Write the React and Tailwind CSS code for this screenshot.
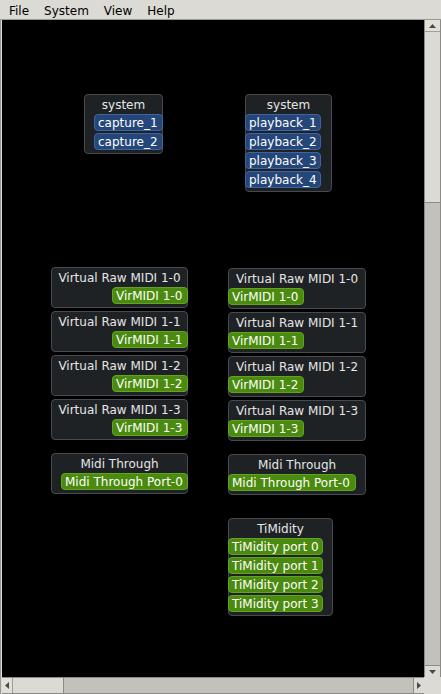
import React from 'react';

// canvas origin on the page is (2, 20); node positions below are relative to it
const nodes = [
  { title: 'system', box: 'left-[82px] top-[74px] w-[79px]', out: true, kind: 'audio', port: 'w-[69px]', ports: ['capture_1', 'capture_2'] },
  { title: 'system', box: 'left-[243px] top-[74px] w-[87px]', out: false, kind: 'audio', port: 'w-[76px]', ports: ['playback_1', 'playback_2', 'playback_3', 'playback_4'] },

  { title: 'Virtual Raw MIDI 1-0', box: 'left-[49px] top-[247px] w-[137px]', out: true, kind: 'midi', port: 'w-[76px]', ports: ['VirMIDI 1-0'] },
  { title: 'Virtual Raw MIDI 1-1', box: 'left-[49px] top-[291px] w-[137px]', out: true, kind: 'midi', port: 'w-[76px]', ports: ['VirMIDI 1-1'] },
  { title: 'Virtual Raw MIDI 1-2', box: 'left-[49px] top-[335px] w-[137px]', out: true, kind: 'midi', port: 'w-[76px]', ports: ['VirMIDI 1-2'] },
  { title: 'Virtual Raw MIDI 1-3', box: 'left-[49px] top-[379px] w-[137px]', out: true, kind: 'midi', port: 'w-[76px]', ports: ['VirMIDI 1-3'] },
  { title: 'Midi Through', box: 'left-[49px] top-[433px] w-[137px]', out: true, kind: 'midi', port: 'w-[127px]', ports: ['Midi Through Port-0'] },

  { title: 'Virtual Raw MIDI 1-0', box: 'left-[226px] top-[248px] w-[138px]', out: false, kind: 'midi', port: 'w-[76px]', ports: ['VirMIDI 1-0'] },
  { title: 'Virtual Raw MIDI 1-1', box: 'left-[226px] top-[292px] w-[138px]', out: false, kind: 'midi', port: 'w-[76px]', ports: ['VirMIDI 1-1'] },
  { title: 'Virtual Raw MIDI 1-2', box: 'left-[226px] top-[336px] w-[138px]', out: false, kind: 'midi', port: 'w-[76px]', ports: ['VirMIDI 1-2'] },
  { title: 'Virtual Raw MIDI 1-3', box: 'left-[226px] top-[380px] w-[138px]', out: false, kind: 'midi', port: 'w-[76px]', ports: ['VirMIDI 1-3'] },
  { title: 'Midi Through', box: 'left-[226px] top-[434px] w-[138px]', out: false, kind: 'midi', port: 'w-[128px]', ports: ['Midi Through Port-0'] },
  { title: 'TiMidity', box: 'left-[226px] top-[498px] w-[105px]', out: false, kind: 'midi', port: 'w-[95px]', ports: ['TiMidity port 0', 'TiMidity port 1', 'TiMidity port 2', 'TiMidity port 3'] },
];

const portColors = {
  audio: 'bg-[#244678] border-[#3f64a0]',
  midi: 'bg-[#4a8a0e] border-[#62a422]',
};

const Node = ({ node }) => (
  <div className={`absolute ${node.box} flex flex-col rounded-[4px] border border-[#474b4f] bg-[#1f2225] pb-[3px]`}>
    <div className="h-[19px] flex items-center justify-center text-[12px] text-[#e6e6e6] whitespace-nowrap">
      {node.title}
    </div>
    <div className="flex flex-col gap-[2px]">
      {node.ports.map((p) => (
        <div
          key={p}
          className={`${node.port} ${portColors[node.kind]} ${node.out ? 'self-end -mr-px' : 'self-start -ml-px'} h-[17px] rounded-[4px] border px-[3px] flex items-center text-[12px] text-white whitespace-nowrap`}
        >
          {p}
        </div>
      ))}
    </div>
  </div>
);

const Arrow = ({ dir }) => {
  const pts = {
    up: '0,4 7,4 3.5,0',
    down: '0,0 7,0 3.5,4',
    left: '4,0 4,7 0,3.5',
    right: '0,0 0,7 4,3.5',
  }[dir];
  const vertical = dir === 'up' || dir === 'down';
  return (
    <svg width={vertical ? 7 : 4} height={vertical ? 4 : 7} viewBox={vertical ? '0 0 7 4' : '0 0 4 7'}>
      <polygon points={pts} fill="#4a4a48" />
    </svg>
  );
};

const App = () => {
  return (
    <div className="w-[441px] h-[694px] flex flex-col bg-[#dcdad5] overflow-hidden" style={{ fontFamily: '"DejaVu Sans", "Liberation Sans", sans-serif' }}>
      {/* Menu bar */}
      <div className="h-[19px] flex items-center pt-[2px] pl-[9px] gap-[15px] text-[12px] text-black">
        <span>File</span>
        <span>System</span>
        <span>View</span>
        <span>Help</span>
      </div>

      {/* Scrolled canvas */}
      <div className="flex-1 min-h-0 flex flex-col border-t border-l border-[#9a9893] pl-px">
        <div className="flex-1 min-h-0 flex">
          <div className="relative flex-1 bg-black overflow-hidden">
            {nodes.map((n, i) => (
              <Node key={i} node={n} />
            ))}
          </div>

          {/* Vertical scrollbar */}
          <div className="w-[17px] flex flex-col bg-[#c3c1bc] border-l border-r border-[#8d8b86]">
            <div className="h-[12px] flex items-center justify-center bg-[#e2e0db] border-b border-[#a09e99]">
              <Arrow dir="up" />
            </div>
            <div className="h-[171px] bg-[#dcdad5] border-b border-[#8d8b86]" />
            <div className="flex-1" />
            <div className="h-[12px] flex items-center justify-center bg-[#dcdad5] border-t border-[#8d8b86]">
              <Arrow dir="down" />
            </div>
          </div>
        </div>

        {/* Horizontal scrollbar */}
        <div className="h-[17px] flex">
          <div className="flex-1 flex bg-[#c3c1bc] border-t border-b border-[#8d8b86]">
            <div className="w-[11px] flex items-center justify-center bg-[#e2e0db] border-r border-[#a09e99]">
              <Arrow dir="left" />
            </div>
            <div className="w-[51px] bg-[#dcdad5] border-r border-[#8d8b86]" />
            <div className="flex-1" />
            <div className="w-[11px] flex items-center justify-center bg-[#dcdad5] border-l border-[#8d8b86]">
              <Arrow dir="right" />
            </div>
          </div>
          <div className="w-[17px] bg-[#dcdad5]" />
        </div>
      </div>
    </div>
  );
};

export default App;
